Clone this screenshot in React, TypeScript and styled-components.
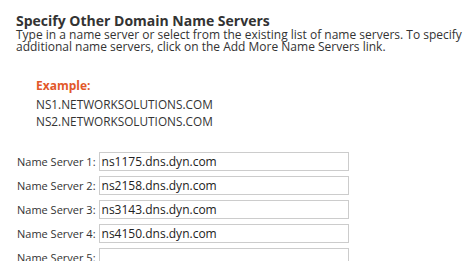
import React from 'react';
import styled, { createGlobalStyle } from 'styled-components';

const GlobalStyle = createGlobalStyle`
  body {
    margin: 0;
    background: #fff;
    font-family: 'Open Sans', sans-serif;
    color: #333;
  }
`;

const Page = styled.div`
  padding: 12px 2px 0 16px;
  width: 469px;
  height: 261px;
  box-sizing: border-box;
  overflow: hidden;
`;

const Title = styled.h2`
  margin: 0;
  font-size: 14px;
  font-weight: 700;
  line-height: 17px;
  color: #333;
`;

const Intro = styled.p`
  margin: 0;
  font-size: 12px;
  line-height: 11.5px;
  color: #333;
`;

const Example = styled.div`
  margin: 25px 0 0 20px;
  font-size: 11.8px;
  line-height: 17px;
`;

const ExampleLabel = styled.div`
  font-size: 12px;
  font-weight: 700;
  color: #e2582a;
  margin-bottom: 2px;
`;

const ServerList = styled.div`
  display: flex;
  flex-direction: column;
  gap: 5px;
  margin-top: 22px;
`;

const Row = styled.label`
  display: flex;
  align-items: center;
  gap: 3px;
`;

const Label = styled.span`
  font-size: 11px;
  white-space: nowrap;
  margin-left: 1px;
`;

const Input = styled.input`
  box-sizing: border-box;
  width: 250px;
  height: 19px;
  padding: 0 2px;
  border: 1px solid #ccc;
  font-family: 'Open Sans', sans-serif;
  font-size: 12px;
  color: #222;
  outline: none;
`;

const servers = [
  'ns1175.dns.dyn.com',
  'ns2158.dns.dyn.com',
  'ns3143.dns.dyn.com',
  'ns4150.dns.dyn.com',
  '',
];

function App() {
  return (
    <Page>
      <GlobalStyle />
      <Title>Specify Other Domain Name Servers</Title>
      <Intro>
        Type in a name server or select from the existing list of name servers. To specify
        additional name servers, click on the Add More Name Servers link.
      </Intro>
      <Example>
        <ExampleLabel>Example:</ExampleLabel>
        <div>NS1.NETWORKSOLUTIONS.COM</div>
        <div>NS2.NETWORKSOLUTIONS.COM</div>
      </Example>
      <ServerList>
        {servers.map((value, i) => (
          <Row key={i}>
            <Label>Name Server {i + 1}:</Label>
            <Input defaultValue={value} />
          </Row>
        ))}
      </ServerList>
    </Page>
  );
}

export default App;
